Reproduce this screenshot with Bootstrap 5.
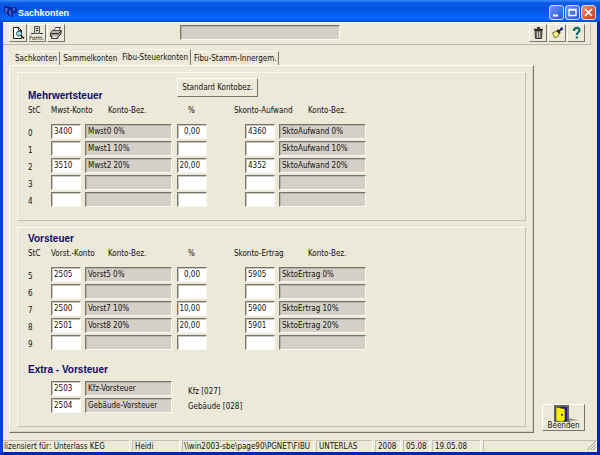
<!DOCTYPE html>
<html lang="de">
<head>
<meta charset="utf-8">
<meta name="viewport" content="width=device-width, initial-scale=1">
<title>Sachkonten</title>
<link href="https://cdn.jsdelivr.net/npm/bootstrap@5.3.0/dist/css/bootstrap.min.css" rel="stylesheet">
<style>
:root { --face: #ece9d8; --shade: #77756b; --soft: #c3c0b0; --navy: #0a0a68; }
body { background: var(--face); color: #111; font: 8px/12px "DejaVu Sans Condensed", "Liberation Sans", Arial, sans-serif; }
.window { border: 3px solid #0a3fdc; border-top: 0; border-right-color: #0426ae; border-bottom-color: #0426ae; }
.titlebar { height: 22px; margin: 0 -3px; padding: 0 4px; background: linear-gradient(#3a8cf8 0, #0a5ae6 3px, #0254e3 10px, #0465fd 18px, #0463f6 20px, #0340b8 22px); }
.titlebar h1 { font: bold 9px/12px "Liberation Sans", Arial, sans-serif; margin: 3px 0 0 1px; color: #fff; }
.caps { gap: 1px; margin-top: 3px; }
.cap-btn { width: 15px; height: 15px; padding: 0; border: 1px solid #cfdcf8; border-radius: 3px; background: linear-gradient(135deg, #6f97f3, #1f55dc); line-height: 0; }
.cap-close { background: linear-gradient(135deg, #f09072, #cf3512); }
.toolbar { height: 23px; margin-right: 6px; padding: 1px 5px 0 6px; gap: 1px; border-top: 1px solid #fff; border-right: 1px solid var(--soft); border-bottom: 1px solid #b9b6a6; }
.tools { gap: 1px; }
.raised { background: var(--face); border: 1px solid; border-color: #fff var(--shade) var(--shade) #fff; border-radius: 0; padding: 0; color: #111; font-size: inherit; line-height: 12px; }
.tool { width: 18px; height: 18px; line-height: 0; }
.tabs { padding-left: 9px; height: 20px; }
.tabs button { border: 0; border-top: 1px solid #faf9f2; border-right: 1px solid var(--shade); border-radius: 0; background: none; color: #111; padding: 0 2px 0 3px; height: 14px; line-height: 13px; white-space: nowrap; }
.tabs button.active { height: 16px; }
.tabs .before-active { border-right: 0; }
.pane { margin-left: 6px; padding: 6px 7px 5px; border: 1px solid; border-color: #fff var(--shade) var(--shade) #fff; box-shadow: inset -1px -1px 0 #d6d3c3; }
.group { border: 1px solid; border-color: #faf9f2 var(--soft) var(--soft) #faf9f2; padding: 5px 10px 11px; }
.group + .group { margin-top: 6px; }
.group h2 { font: bold 10px/12px "Liberation Sans", Arial, sans-serif; color: var(--navy); margin: 0; }
.head { height: 24px; }
.head h2 { width: 149px; }
.std-btn { width: 81px; height: 19px; }
.accounts { table-layout: fixed; width: 338px; }
.accounts th { font-weight: normal; white-space: nowrap; height: 22px; padding: 3px 0 0; vertical-align: top; }
.accounts tbody th { height: 17px; padding: 4px 0 0; }
.accounts td { height: 17px; padding: 0; vertical-align: top; }
.c-no { width: 23px; } .c-acc { width: 34px; } .c-name { width: 92px; } .c-pct { width: 57px; } .c-sk { width: 45px; } .c-skname { width: 87px; }
.accounts .in-name { padding-left: 23px; } .accounts .in-pct { padding-left: 11px; } .accounts .in-skname { padding-left: 29px; }
.accounts .in-sk { padding-left: 11px; }
.fld { display: block; width: 30px; height: 15px; padding: 0 0 0 2px; border: 1px solid; border-color: var(--shade) #faf9f2 #faf9f2 var(--shade); border-radius: 0; background: #fff; color: #111; font: inherit; line-height: 12px; box-shadow: inset 1px 1px 0 #c9c6bb; }
.fld-name { width: 87px; background: #d4d0c8; box-shadow: inset 1px 1px 0 #b5b2a8; }
.fld.num { text-align: right; padding: 0 6px 0 0; }
.search-box { width: 160px; height: 15px; margin: 1px 0 0 114px; }
.extra-title { padding-top: 12px; }
.extra { margin: 5px 0 0 23px; }
.extra .pair { height: 17px; gap: 4px; }
.extra .notes { padding: 3px 0 0 16px; }
.extra .notes label { line-height: 15px; }
.side { width: 63px; padding: 0 12px 2px 8px; }
.exit-btn { width: 43px; height: 27px; line-height: 8px; }
.exit-btn svg { flex: none; }
.statusbar { height: 12px; line-height: 11px; }
.statusbar span { border: 1px solid; border-color: var(--soft) #fff transparent var(--soft); padding-left: 2px; white-space: nowrap; flex: none; margin-right: 2px; }
.w-lic { width: 127px; } .w-user { width: 48px; } .w-path { width: 132px; } .w-comp { width: 57px; } .w-year { width: 26px; } .w-mon { width: 27px; } .w-date { width: 49px; }
.statusbar .w-lic { border-left: 0; padding-left: 1px; }
.statusbar .w-path { padding-left: 1px; }
.statusbar .w-rest { flex: 1; margin: 0; text-align: right; line-height: 0; }
</style>
</head>
<body>
<div class="window d-flex flex-column min-vh-100">
  <header class="titlebar d-flex align-items-center">
    <svg width="13" height="13" viewBox="0 0 13 13" aria-hidden="true"><path d="M1 2h4v5H1zM7 3h5v4H8zM2 8h3v3M8 7v5M5 4h3" fill="none" stroke="#141b7c" stroke-width="1.4"/><path d="M2 3v5M9 4h2M6 6v3" stroke="#8d86dc"/></svg>
    <h1 class="flex-grow-1">Sachkonten</h1>
    <div class="caps d-flex">
      <button type="button" class="cap-btn" aria-label="Minimieren"><svg width="13" height="13" viewBox="0 0 13 13"><path d="M3 9.500h5" stroke="#fff" stroke-width="2"/></svg></button>
      <button type="button" class="cap-btn" aria-label="Maximieren"><svg width="13" height="13" viewBox="0 0 13 13"><path d="M3 3.500h7v6H3zM3 4h7" fill="none" stroke="#fff" stroke-width="1.3"/></svg></button>
      <button type="button" class="cap-btn cap-close" aria-label="Schließen"><svg width="13" height="13" viewBox="0 0 13 13"><path d="M3 3l7 7M10 3l-7 7" stroke="#fff" stroke-width="1.7"/></svg></button>
    </div>
  </header>

  <div class="toolbar d-flex">
    <button type="button" class="raised tool" aria-label="Vorschau"><svg width="16" height="16" viewBox="0 0 16 16"><path d="M3.500 2.500h5l3 3v8h-8z" fill="#fff" stroke="#222"/><path d="M8.500 2.500v3h3" fill="none" stroke="#222"/><circle cx="9" cy="8.500" r="2.500" fill="#a9dfe4" stroke="#27555c"/><path d="M11 10.500l3 3" stroke="#222" stroke-width="1.600"/></svg></button>
    <button type="button" class="raised tool" aria-label="Formular"><svg width="16" height="16" viewBox="0 0 16 16"><path d="M5.500 1.500h5v7h-5z" fill="#ccc" stroke="#555"/><path d="M7 3.500h2M7 5.500h2M2 8.500h3M11 8.500h3" stroke="#333"/><text x="0" y="15" font-size="6" font-family="DejaVu Sans Condensed, sans-serif" fill="#111">Form.</text></svg></button>
    <button type="button" class="raised tool" aria-label="Drucken"><svg width="16" height="16" viewBox="0 0 16 16"><path d="M5.500 6l2-3.500h5l-2 3.500" fill="#fff" stroke="#444"/><path d="M2.500 8l2-2.500h9l-1.500 3h-9z" fill="#b9b7ae" stroke="#444"/><path d="M2.500 8.500v3h1.500l-.5 2h6l1-2 2.500-2.500v-3l-2.500 2.500z" fill="#8f8d85" stroke="#333"/><path d="M4.500 11h5M4.500 12.500h4" stroke="#fff"/></svg></button>
    <input type="text" class="fld fld-name search-box" aria-label="Status" readonly>
    <div class="tools d-flex ms-auto">
      <button type="button" class="raised tool" aria-label="Löschen"><svg width="16" height="16" viewBox="0 0 16 16"><path d="M5 5.500h7l-.5 8h-6z" fill="#77756e" stroke="#333"/><path d="M4 4.500h9M7 2.800h3" stroke="#222" stroke-width="1.400"/><path d="M7.500 7v6M9.500 7v6" stroke="#bbb"/></svg></button>
      <button type="button" class="raised tool" aria-label="Bereinigen"><svg width="16" height="16" viewBox="0 0 16 16"><path d="M3.500 8l4-2 3 3-2 3-3 .5z" fill="#f1ee8a" stroke="#77752f"/><path d="M8 5l3 3M9.500 6.500l3-2.500" stroke="#222" stroke-width="1.800"/><path d="M12 4.500l1.500-1.500" stroke="#1c2a86" stroke-width="2.600"/></svg></button>
      <button type="button" class="raised tool" aria-label="Hilfe"><svg width="16" height="16" viewBox="0 0 16 16"><path d="M6 6c0-4 5.500-4 5.500-.800 0 2.200-2.700 2-2.700 4.800" fill="none" stroke="#0a6f68" stroke-width="2.200"/><path d="M7.700 11.500h2.300v2H7.700z" fill="#0a6f68"/></svg></button>
    </div>
  </div>

  <nav class="tabs d-flex align-items-end" aria-label="Konten">
    <button type="button">Sachkonten</button>
    <button type="button" class="before-active">Sammelkonten</button>
    <button type="button" class="active" aria-current="page">Fibu-Steuerkonten</button>
    <button type="button">Fibu-Stamm-Innergem.</button>
  </nav>

  <div class="d-flex">
    <main class="pane flex-grow-1">
      <section class="group">
        <div class="head d-flex">
          <h2 class="align-self-end">Mehrwertsteuer</h2>
          <button type="button" class="raised std-btn">Standard Kontobez.</button>
        </div>
        <table class="accounts">
          <colgroup><col class="c-no"><col class="c-acc"><col class="c-name"><col class="c-pct"><col class="c-sk"><col class="c-skname"></colgroup>
          <thead><tr><th scope="col">StC</th><th scope="col">Mwst-Konto</th><th scope="col" class="in-name">Konto-Bez.</th><th scope="col" class="in-pct">%</th><th scope="col">Skonto-Aufwand</th><th scope="col" class="in-skname">Konto-Bez.</th></tr></thead>
          <tbody>
            <tr><th scope="row">0</th><td><input class="fld" aria-label="Mwst-Konto 0" value="3400"></td><td><input class="fld fld-name" aria-label="Konto-Bez. 0" value="Mwst0 0%" readonly></td><td><input class="fld num" aria-label="Prozent 0" value="0,00"></td><td class="in-sk"><input class="fld" aria-label="Skonto-Aufwand 0" value="4360"></td><td><input class="fld fld-name" aria-label="Skonto-Bez. 0" value="SktoAufwand 0%" readonly></td></tr>
            <tr><th scope="row">1</th><td><input class="fld" aria-label="Mwst-Konto 1"></td><td><input class="fld fld-name" aria-label="Konto-Bez. 1" value="Mwst1 10%" readonly></td><td><input class="fld num" aria-label="Prozent 1"></td><td class="in-sk"><input class="fld" aria-label="Skonto-Aufwand 1"></td><td><input class="fld fld-name" aria-label="Skonto-Bez. 1" value="SktoAufwand 10%" readonly></td></tr>
            <tr><th scope="row">2</th><td><input class="fld" aria-label="Mwst-Konto 2" value="3510"></td><td><input class="fld fld-name" aria-label="Konto-Bez. 2" value="Mwst2 20%" readonly></td><td><input class="fld num" aria-label="Prozent 2" value="20,00"></td><td class="in-sk"><input class="fld" aria-label="Skonto-Aufwand 2" value="4352"></td><td><input class="fld fld-name" aria-label="Skonto-Bez. 2" value="SktoAufwand 20%" readonly></td></tr>
            <tr><th scope="row">3</th><td><input class="fld" aria-label="Mwst-Konto 3"></td><td><input class="fld fld-name" aria-label="Konto-Bez. 3" readonly></td><td><input class="fld num" aria-label="Prozent 3"></td><td class="in-sk"><input class="fld" aria-label="Skonto-Aufwand 3"></td><td><input class="fld fld-name" aria-label="Skonto-Bez. 3" readonly></td></tr>
            <tr><th scope="row">4</th><td><input class="fld" aria-label="Mwst-Konto 4"></td><td><input class="fld fld-name" aria-label="Konto-Bez. 4" readonly></td><td><input class="fld num" aria-label="Prozent 4"></td><td class="in-sk"><input class="fld" aria-label="Skonto-Aufwand 4"></td><td><input class="fld fld-name" aria-label="Skonto-Bez. 4" readonly></td></tr>
          </tbody>
        </table>
      </section>

      <section class="group">
        <h2>Vorsteuer</h2>
        <table class="accounts">
          <colgroup><col class="c-no"><col class="c-acc"><col class="c-name"><col class="c-pct"><col class="c-sk"><col class="c-skname"></colgroup>
          <thead><tr><th scope="col">StC</th><th scope="col">Vorst.-Konto</th><th scope="col" class="in-name">Konto-Bez.</th><th scope="col" class="in-pct">%</th><th scope="col">Skonto-Ertrag</th><th scope="col" class="in-skname">Konto-Bez.</th></tr></thead>
          <tbody>
            <tr><th scope="row">5</th><td><input class="fld" aria-label="Vorst.-Konto 5" value="2505"></td><td><input class="fld fld-name" aria-label="Konto-Bez. 5" value="Vorst5 0%" readonly></td><td><input class="fld num" aria-label="Prozent 5" value="0,00"></td><td class="in-sk"><input class="fld" aria-label="Skonto-Ertrag 5" value="5905"></td><td><input class="fld fld-name" aria-label="Skonto-Bez. 5" value="SktoErtrag 0%" readonly></td></tr>
            <tr><th scope="row">6</th><td><input class="fld" aria-label="Vorst.-Konto 6"></td><td><input class="fld fld-name" aria-label="Konto-Bez. 6" readonly></td><td><input class="fld num" aria-label="Prozent 6"></td><td class="in-sk"><input class="fld" aria-label="Skonto-Ertrag 6"></td><td><input class="fld fld-name" aria-label="Skonto-Bez. 6" readonly></td></tr>
            <tr><th scope="row">7</th><td><input class="fld" aria-label="Vorst.-Konto 7" value="2500"></td><td><input class="fld fld-name" aria-label="Konto-Bez. 7" value="Vorst7 10%" readonly></td><td><input class="fld num" aria-label="Prozent 7" value="10,00"></td><td class="in-sk"><input class="fld" aria-label="Skonto-Ertrag 7" value="5900"></td><td><input class="fld fld-name" aria-label="Skonto-Bez. 7" value="SktoErtrag 10%" readonly></td></tr>
            <tr><th scope="row">8</th><td><input class="fld" aria-label="Vorst.-Konto 8" value="2501"></td><td><input class="fld fld-name" aria-label="Konto-Bez. 8" value="Vorst8 20%" readonly></td><td><input class="fld num" aria-label="Prozent 8" value="20,00"></td><td class="in-sk"><input class="fld" aria-label="Skonto-Ertrag 8" value="5901"></td><td><input class="fld fld-name" aria-label="Skonto-Bez. 8" value="SktoErtrag 20%" readonly></td></tr>
            <tr><th scope="row">9</th><td><input class="fld" aria-label="Vorst.-Konto 9"></td><td><input class="fld fld-name" aria-label="Konto-Bez. 9" readonly></td><td><input class="fld num" aria-label="Prozent 9"></td><td class="in-sk"><input class="fld" aria-label="Skonto-Ertrag 9"></td><td><input class="fld fld-name" aria-label="Skonto-Bez. 9" readonly></td></tr>
          </tbody>
        </table>
        <h2 class="extra-title">Extra - Vorsteuer</h2>
        <div class="extra d-flex">
          <div>
            <div class="pair d-flex"><input class="fld" id="kfz" value="2503"><input class="fld fld-name" aria-label="Bezeichnung Kfz" value="Kfz-Vorsteuer" readonly></div>
            <div class="pair d-flex"><input class="fld" id="geb" value="2504"><input class="fld fld-name" aria-label="Bezeichnung Gebäude" value="Gebäude-Vorsteuer" readonly></div>
          </div>
          <div class="notes d-flex flex-column"><label for="kfz">Kfz [027]</label><label for="geb">Gebäude [028]</label></div>
        </div>
      </section>
    </main>
    <aside class="side d-flex align-items-end">
      <button type="button" class="raised exit-btn d-flex flex-column align-items-center"><svg width="32" height="17" viewBox="0 0 32 17" aria-hidden="true"><path d="M20 13l11 2.500H20z" fill="#858377"/><path d="M6 0h15v17H6z" fill="#66645e"/><path d="M9 2h10v14H9z" fill="#1c1c9a"/><path d="M8 2l9 2v11l-3 2-6-1z" fill="#fff200" stroke="#333" stroke-width=".6"/><path d="M13 9h2v1.500h-2z" fill="#222"/></svg>Beenden</button>
    </aside>
  </div>

  <footer class="statusbar d-flex mt-auto">
    <span class="w-lic">lizensiert für: Unterlass KEG</span><span class="w-user">Heidi</span><span class="w-path">\\win2003-sbe\page90\PGNET\FIBU</span><span class="w-comp">UNTERLAS</span><span class="w-year">2008</span><span class="w-mon">05.08</span><span class="w-date">19.05.08</span><span class="w-rest"><svg width="9" height="9" viewBox="0 0 9 9" aria-hidden="true"><path d="M0 9l9-9M3 9l6-6M6 9l3-3" stroke="#a5a292"/></svg></span>
  </footer>
</div>
<script src="https://cdn.jsdelivr.net/npm/bootstrap@5.3.0/dist/js/bootstrap.bundle.min.js"></script>
</body>
</html>
